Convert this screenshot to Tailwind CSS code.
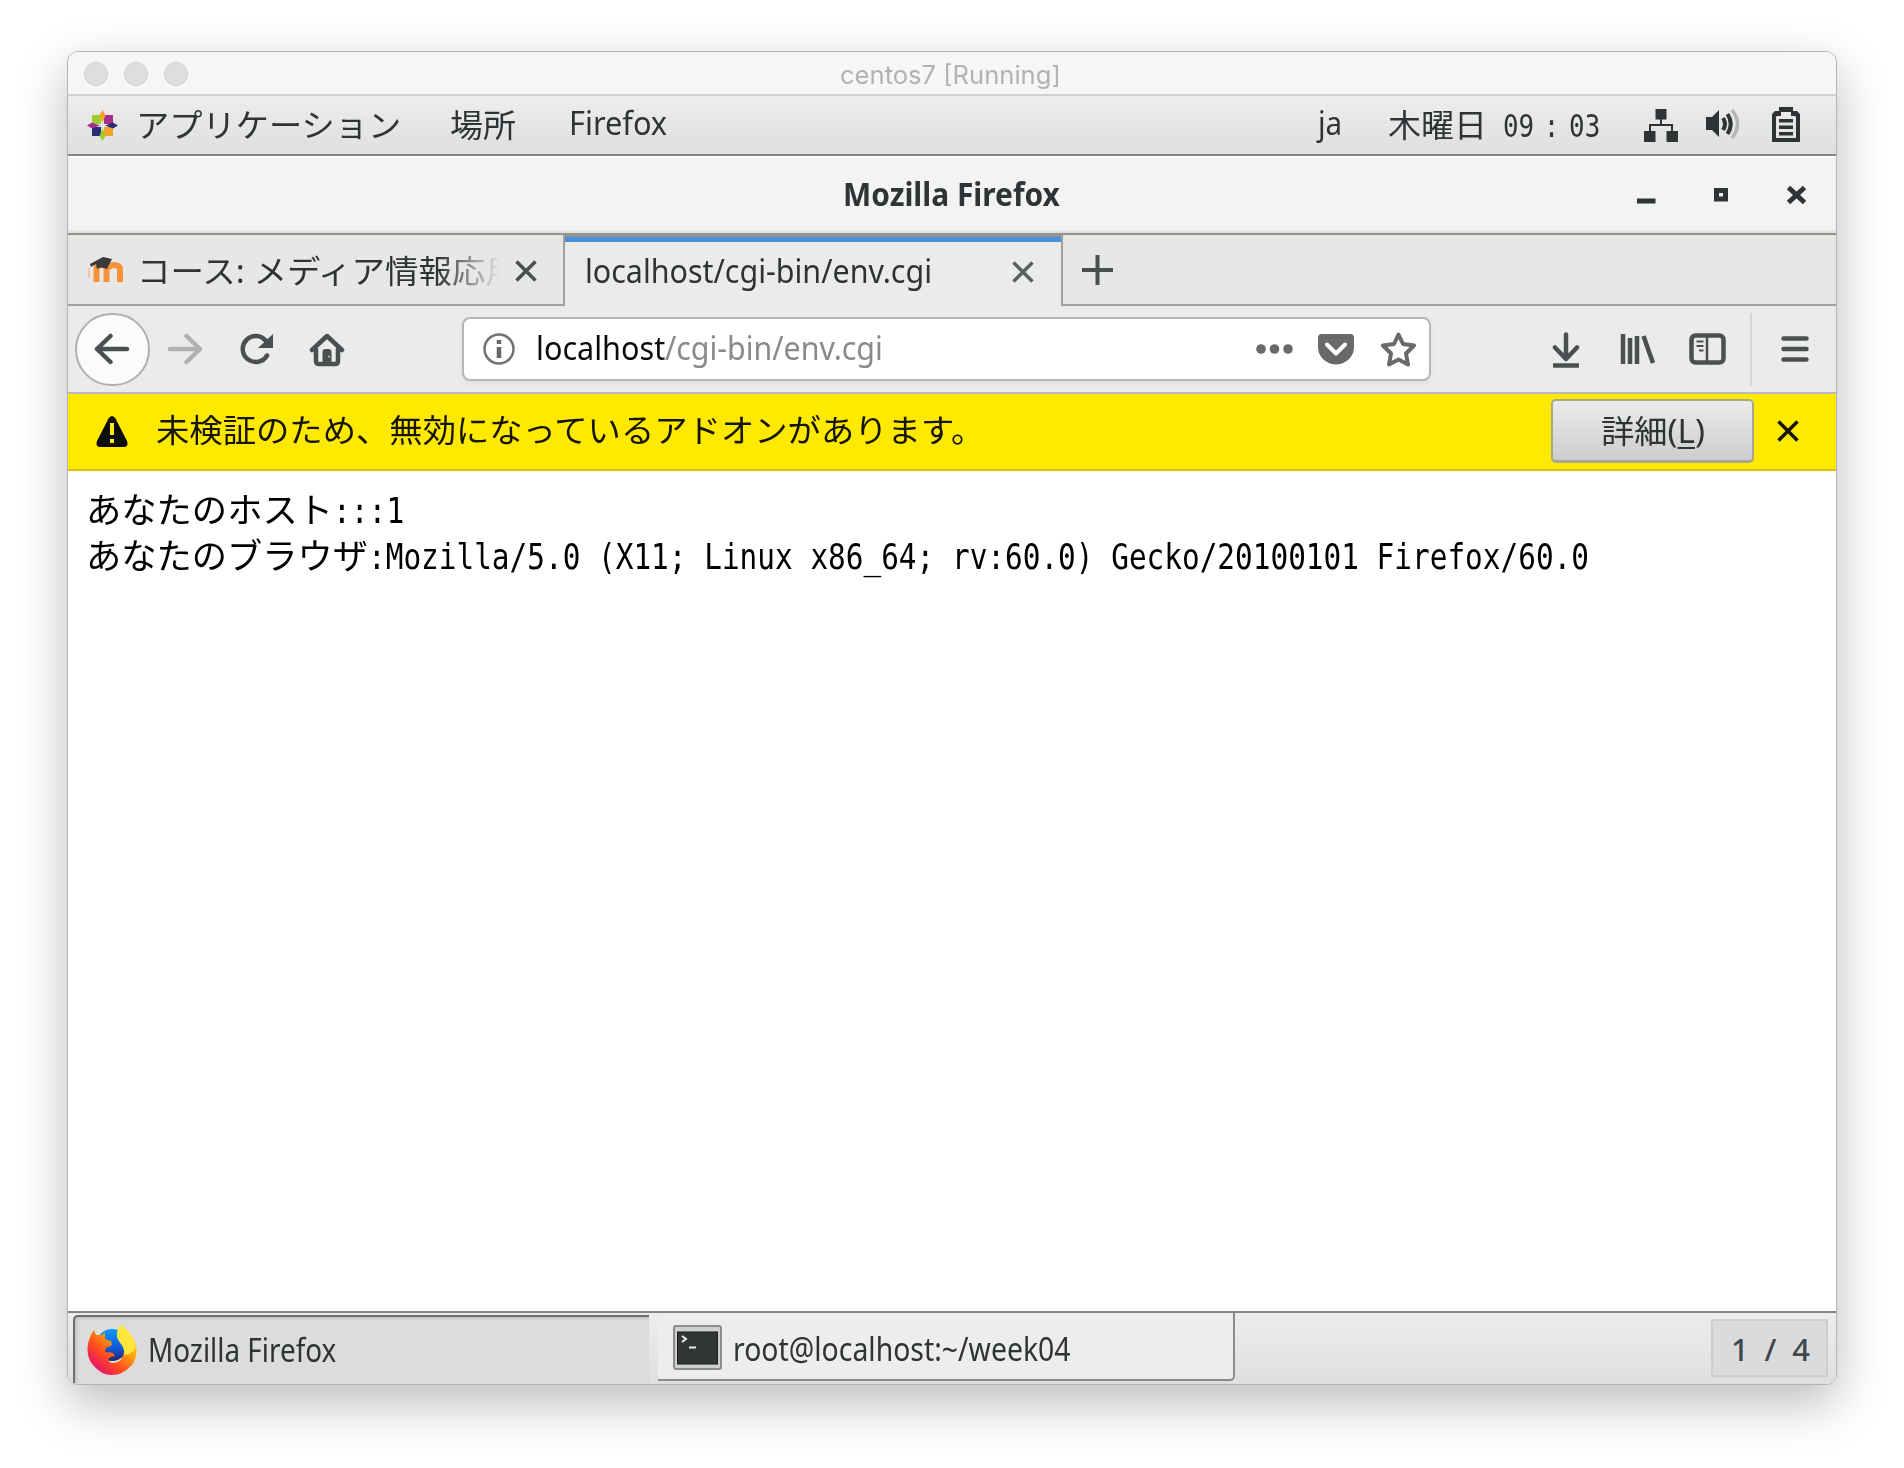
<!DOCTYPE html>
<html lang="ja">
<head>
<meta charset="utf-8">
<title>centos7 [Running]</title>
<script src="https://cdn.jsdelivr.net/npm/@tailwindcss/browser@4"></script>
</head>
<body class="w-[1904px] h-[1468px] overflow-hidden bg-white pt-[51px] pl-[67px] font-['Noto_Sans','Noto_Sans_CJK_JP',sans-serif] text-[32px] leading-[40px] text-[#2e3436]">
<div class="w-[1770px] h-[1334px] flex flex-col rounded-[11px] border border-[#b4b4b4] overflow-hidden bg-white shadow-[0_18px_50px_rgba(0,0,0,0.27)]">

  <!-- Host window title bar -->
  <header class="h-[44px] shrink-0 flex items-center bg-[#f6f6f6] border-b-2 border-[#d2d2d2] pl-[16px]">
    <div class="flex gap-[16px] pt-px">
      <i class="size-6 rounded-full bg-[#dedede] border border-[#cbcbcb]"></i>
      <i class="size-6 rounded-full bg-[#dedede] border border-[#cbcbcb]"></i>
      <i class="size-6 rounded-full bg-[#dedede] border border-[#cbcbcb]"></i>
    </div>
    <div data-fit class="ml-[652px] w-[221px] shrink-0 pt-[3px] font-['Inter',sans-serif] text-[25px] text-[#b2b2b2] whitespace-nowrap"><span class="inline-block origin-left">centos7 [Running]</span></div>
  </header>

  <!-- Desktop panel -->
  <nav class="h-[60px] shrink-0 flex items-center bg-linear-to-b from-[#ededed] to-[#dfdfdf] border-b-2 border-[#858585]">
    <svg class="ml-[19px] shrink-0" width="31" height="31" viewBox="0 0 31 31">
      <path fill="#9ccd2a" d="M5 5h9v9H5z"/><path fill="#a5308c" d="M17 5h9v9h-9z"/><path fill="#2b2a78" d="M5 17h9v9H5z"/><path fill="#f3a32b" d="M17 17h9v9h-9z"/>
      <path fill="#f3a32b" d="M15.500 0l3 5-3 8-3-8z"/><path fill="#2b2a78" d="M31 15.500l-5 3-8-3 8-3z"/><path fill="#9ccd2a" d="M15.500 31l-3-5 3-8 3 8z"/><path fill="#a5308c" d="M0 15.500l5-3 8 3-8 3z"/>
    </svg>
    <div data-fit class="ml-[18px] w-[265px] shrink-0 whitespace-nowrap"><span class="inline-block origin-left">アプリケーション</span></div>
    <div data-fit class="ml-[49px] w-[66px] shrink-0 whitespace-nowrap"><span class="inline-block origin-left">場所</span></div>
    <div data-fit class="ml-[53px] w-[98px] shrink-0 pb-[4px] whitespace-nowrap"><span class="inline-block origin-left">Firefox</span></div>
    <div data-fit class="ml-[651px] w-[24px] shrink-0 pb-[4px] whitespace-nowrap"><span class="inline-block origin-left">ja</span></div>
    <div data-fit class="ml-[46px] w-[99px] shrink-0 whitespace-nowrap"><span class="inline-block origin-left">木曜日</span></div>
    <div data-fit class="ml-[16px] w-[97px] shrink-0 pt-px font-['DejaVu_Sans_Mono',monospace] whitespace-nowrap"><span class="inline-block origin-left">09<span class="inline-block px-[12px]">:</span>03</span></div>
    <svg class="ml-[44px] shrink-0" width="34" height="33" viewBox="0 0 34 33" fill="#2e3436"><path d="M11.500 0h11v10.500H18V15h11v7h5v11H22.500V22H27v-5H7v5h4.500v11H0V22h5v-7h11v-4.500h-4.500z"/></svg>
    <svg class="ml-[28px] mb-[2px] shrink-0" width="35" height="32" viewBox="0 0 35 32"><path fill="#2e3436" d="M0 9h6l7-7v27l-7-7H0z"/><path d="M17 10q4 6 0 12M21.500 6q6.500 10 0 20" fill="none" stroke="#2e3436" stroke-width="4"/><path d="M26 2q11 14 0 28" fill="none" stroke="#b4b5b5" stroke-width="3.500"/></svg>
    <svg class="ml-[31px] mb-px shrink-0" width="28" height="35" viewBox="0 0 28 35"><path fill="#2e3436" fill-rule="evenodd" d="M7 0h14v4h4l3 3v28H0V7l3-3h4zM9 5v4H5l-1 1v21h20V10l-1-1h-4V5z"/><path fill="#2e3436" d="M7 12h14v3.500H7zM7 18.500h14V22H7zM7 25h14v3.500H7z"/></svg>
  </nav>

  <!-- Firefox title bar -->
  <div class="h-[79px] shrink-0 flex items-center bg-[#f3f3f3] border-b-2 border-[#95958f] shadow-[inset_0_-3px_3px_-1px_#dcdcdc,inset_0_2px_0_#fff]">
    <div data-fit class="ml-[775px] w-[217px] shrink-0 pb-[2px] font-bold whitespace-nowrap"><span class="inline-block origin-left">Mozilla Firefox</span></div>
    <svg class="ml-[577px] shrink-0" width="172" height="20" viewBox="0 0 172 20" fill="none" stroke="#2e3436"><path stroke-width="5" d="M0 16h18.500"/><path stroke-width="5" d="M79.500 5.500h9v8.500h-9z"/><path stroke-width="5" d="M151.500 2.500l16 15M167.500 2.500l-16 15"/></svg>
  </div>

  <!-- Tab strip -->
  <div class="h-[71px] shrink-0 flex bg-[#e7e7e5]">
    <div class="w-[497px] shrink-0 flex items-center border-r-2 border-b-2 border-[#a0a09d]">
      <svg class="ml-[20px] shrink-0" width="36" height="28" viewBox="0 0 36 28"><path d="M8.500 26V13q0-4 5-4t5 4v13M20 13q1-4 6-4 6 0 6 5v12" fill="none" stroke="#f7923a" stroke-width="6"/><path d="M1 12v10" stroke="#f5c4a6" stroke-width="2"/><path d="M2 8L15 1l9 2-5 10q-6-3-10 0l-1-5-5 3z" fill="#3b3939"/></svg>
      <div class="ml-[13px] w-[367px] shrink-0 overflow-hidden pt-[2px] whitespace-nowrap mask-r-from-[82%] mask-r-to-[99%]"><div data-fit class="w-[382px]"><span class="inline-block origin-left">コース: メディア情報応用</span></div></div>
      <svg class="ml-[11px] mt-[2px] shrink-0" width="22" height="22" viewBox="0 0 22 22" stroke="#4a5052" stroke-width="3.500"><path d="M1.500 1.500l19 19M20.500 1.500l-19 19"/></svg>
    </div>
    <div class="w-[496px] shrink-0 flex items-center bg-[#ebebe9] border-t-2 border-[#8f9497] shadow-[inset_0_5px_0_#4a90d9]">
      <div data-fit class="ml-[20px] w-[347px] shrink-0 pb-px whitespace-nowrap"><span class="inline-block origin-left">localhost/cgi-bin/env.cgi</span></div>
      <svg class="ml-[80px] shrink-0" width="22" height="22" viewBox="0 0 22 22" stroke="#5b6062" stroke-width="3.500"><path d="M1.500 1.500l19 19M20.500 1.500l-19 19"/></svg>
    </div>
    <div class="grow flex items-center border-l-2 border-b-2 border-[#a0a09d]">
      <svg class="ml-[19px] shrink-0" width="31" height="30" viewBox="0 0 31 30" stroke="#4a5052" stroke-width="4"><path d="M15.500 0v30M0 15h31"/></svg>
    </div>
  </div>

  <!-- Navigation toolbar -->
  <div class="h-[88px] shrink-0 flex items-center bg-[#ebebe9] border-b-2 border-[#b9b9b9]">
    <div class="ml-[7px] w-[75px] h-[73px] shrink-0 flex items-center justify-center rounded-full bg-[#fbfbfb] border-2 border-[#b0b0b0]">
      <svg class="mr-px" width="36" height="32" viewBox="0 0 36 32" fill="none" stroke="#4a5052" stroke-width="4.500" stroke-linecap="round" stroke-linejoin="round"><path d="M33 16H3M16.500 3L3 16l13.500 13"/></svg>
    </div>
    <svg class="ml-[17px] shrink-0" width="36" height="32" viewBox="0 0 36 32" fill="none" stroke="#afb0b0" stroke-width="4.500" stroke-linecap="round" stroke-linejoin="round"><path d="M3 16h30M19.500 3L33 16 19.500 29"/></svg>
    <svg class="ml-[36px] shrink-0" width="36" height="32" viewBox="0 0 36 32" fill="none"><path d="M28 22.500A13 13 0 1 1 27 8" stroke="#4a5052" stroke-width="4.500" stroke-linecap="round"/><path d="M34 1v14H19z" fill="#4a5052"/></svg>
    <svg class="ml-[34px] shrink-0" width="36" height="35" viewBox="0 0 36 35" fill="none"><path d="M3 18L18 4l15 14M7 17v12q0 3 3 3h16q3 0 3-3V17" stroke="#4a5052" stroke-width="4.500" stroke-linecap="round" stroke-linejoin="round"/><path fill="#4a5052" d="M13.500 20q0-3 3-3h3q3 0 3 3v12h-9z"/><circle cx="20" cy="24.500" r="1" fill="#ccc"/></svg>
    <div class="ml-[117px] w-[969px] h-[64px] shrink-0 flex items-center bg-white rounded-[8px] border-2 border-[#b6b6b5] shadow-[0_3px_5px_rgba(0,0,0,0.05)]">
      <svg class="ml-[19px] shrink-0" width="32" height="32" viewBox="0 0 32 32"><circle cx="16" cy="16" r="14.500" fill="none" stroke="#737373" stroke-width="2.500"/><path stroke="#666" stroke-width="4.500" d="M16 14v11M16 7v4"/></svg>
      <div data-fit class="ml-[21px] w-[129px] shrink-0 pb-[3px] text-[#0c0c0d] whitespace-nowrap"><span class="inline-block origin-left">localhost</span></div>
      <div data-fit class="w-[218px] shrink-0 pb-[3px] text-[#8a8a8a] whitespace-nowrap"><span class="inline-block origin-left">/cgi-bin/env.cgi</span></div>
      <svg class="ml-[373px] shrink-0" width="37" height="12" viewBox="0 0 37 12" fill="#696969"><circle cx="5" cy="6" r="4.800"/><circle cx="18.500" cy="6" r="4.800"/><circle cx="32" cy="6" r="4.800"/></svg>
      <svg class="ml-[25px] shrink-0" width="36" height="32" viewBox="0 0 36 32"><path fill="#696969" d="M3.500 1h29Q36 1 36 4.500V14q0 8-6 13-12 9-24 0-6-5-6-13V4.500Q0 1 3.500 1z"/><path d="M9 11.500l9 9 9-9" fill="none" stroke="#fff" stroke-width="4" stroke-linecap="round" stroke-linejoin="round"/></svg>
      <svg class="ml-[26px] shrink-0" width="37" height="36" viewBox="0 0 37 36"><path fill="none" stroke="#696969" stroke-width="4" stroke-linejoin="round" d="M18.500 3.500l4.500 9.500 11 1.500-8 8 2 11-9.500-5-9.500 5 2-11-8-8 11-1.500z"/></svg>
    </div>
    <svg class="ml-[121px] mt-px shrink-0" width="28" height="36" viewBox="0 0 28 36" fill="none" stroke="#4a5052" stroke-width="4.500" stroke-linecap="round" stroke-linejoin="round"><path d="M14 2.500V26M3 15.500L14 27l11-11.500"/><path d="M1 33.500h26" stroke-linecap="butt"/></svg>
    <svg class="ml-[40px] shrink-0" width="36" height="32" viewBox="0 0 36 32" stroke="#4a5052" stroke-width="4.500"><path d="M3 1v30M10 5v26M17 3v28M23.500 3L33 30"/></svg>
    <svg class="ml-[33px] shrink-0" width="37" height="32" viewBox="0 0 37 32" fill="none" stroke="#4a5052"><rect x="2.500" y="2.500" width="32" height="27" rx="4" stroke-width="4.500"/><path stroke-width="2.500" d="M18 3v26"/><path stroke-width="2" d="M7.500 8.500h7M7.500 13h7M10 17.500h4.500"/></svg>
    <div class="ml-[24px] w-[2px] h-[73px] bg-[#d6d6d5]"></div>
    <svg class="ml-[29px] shrink-0" width="28" height="28" viewBox="0 0 28 28" stroke="#4a5052" stroke-width="4.500" stroke-linecap="round"><path d="M2.500 3.500h23M2.500 14h23M2.500 24.500h23"/></svg>
  </div>

  <!-- Notification bar -->
  <div class="h-[77px] shrink-0 flex items-center bg-[#ffe900] border-b-2 border-[#d6c400]">
    <svg class="ml-[28px] mb-px shrink-0" width="32" height="31" viewBox="0 0 32 31"><path fill="#0c0c0d" d="M12.500 2.500q3.500-5 7 0L31 25q2 6-4 6H5q-6 0-4-6z"/><path stroke="#ffe900" stroke-width="4" d="M16 7v12M16 23v4"/></svg>
    <div data-fit class="ml-[28px] w-[828px] shrink-0 pb-[4px] text-[#151500] whitespace-nowrap"><span class="inline-block origin-left">未検証のため、無効になっているアドオンがあります。</span></div>
    <button class="ml-[567px] w-[203px] h-[64px] mb-[1px] shrink-0 flex items-center justify-center rounded-[5px] bg-linear-to-b from-[#ebebeb] to-[#cdcdcd] border-2 border-b-3 border-[#a9a690]">
      <div data-fit class="w-[104px] shrink-0 text-left whitespace-nowrap"><span class="inline-block origin-left">詳細(<span class="underline decoration-2 underline-offset-4">L</span>)</span></div>
    </button>
    <svg class="ml-[23px] mb-[2px] shrink-0" width="22" height="22" viewBox="0 0 22 22" stroke="#151500" stroke-width="3.500"><path d="M1.500 1.500l19 19M20.500 1.500l-19 19"/></svg>
  </div>

  <!-- Page content -->
  <main class="grow pl-[18px] pt-[18px] text-black font-['DejaVu_Sans_Mono','Noto_Sans_CJK_JP',monospace] text-[35px] leading-[45px] whitespace-nowrap">
    <div class="flex h-[46px]">
      <div data-fit class="w-[247px] shrink-0"><span class="inline-block origin-left">あなたのホスト</span></div>
      <div data-fit class="w-[71px] shrink-0"><span class="inline-block origin-left">:::1</span></div>
    </div>
    <div class="flex h-[45px]">
      <div data-fit class="w-[282px] shrink-0"><span class="inline-block origin-left">あなたのブラウザ</span></div>
      <div data-fit class="w-[1221px] shrink-0"><span class="inline-block origin-left">:Mozilla/5.0 (X11; Linux x86_64; rv:60.0) Gecko/20100101 Firefox/60.0</span></div>
    </div>
  </main>

  <!-- Window list -->
  <footer class="h-[73px] shrink-0 flex items-start bg-linear-to-b from-[#ededed] to-[#dfdfdf] border-t-2 border-[#858585]">
    <div class="ml-[5px] mt-[2px] w-[576px] h-[69px] shrink-0 flex items-center bg-[#dcdcdc] rounded-tl-[5px] border-t-2 border-l-2 border-[#6e6e6e] shadow-[inset_2px_2px_3px_#c4c4c4]">
      <svg class="ml-[12px] mb-px shrink-0" width="50" height="50" viewBox="0 0 50 50">
        <defs>
          <linearGradient id="fox" x1="0.900" y1="0.100" x2="0.200" y2="0.900"><stop offset="0" stop-color="#ffe226"/><stop offset="0.400" stop-color="#ff9a0b"/><stop offset="0.700" stop-color="#ff4a1f"/><stop offset="1" stop-color="#e8156b"/></linearGradient>
          <linearGradient id="globe" x1="0.500" y1="0" x2="0.500" y2="1"><stop offset="0" stop-color="#0a9bff"/><stop offset="0.600" stop-color="#1257d8"/><stop offset="1" stop-color="#2b2566"/></linearGradient>
        </defs>
        <circle cx="25" cy="20" r="16" fill="url(#globe)"/>
        <path fill="url(#fox)" d="M7 5l2 5 6 0 3-3 0 7q4 2 6 2l1 4-6 3-1 4q4 0 8 1l2 3q-4 0-6 2-2 4 3 5 9 0 11-7 3-6-1-12-6-6-4-13 2-4 3-6 12 9 15 20 2 12-4 20-9 10-20 10T6 40Q-1 32 1 19 3 10 7 5z"/>
        <path fill="#ffe63c" d="M34 0q12 8 15 22-4 8-12 8 1-6-3-11-5-6-4-11 1-5 4-8z"/>
      </svg>
      <div data-fit class="ml-[11px] w-[188px] shrink-0 pb-px whitespace-nowrap"><span class="inline-block origin-left">Mozilla Firefox</span></div>
    </div>
    <div class="ml-[9px] w-[577px] h-[68px] shrink-0 flex items-center bg-[#ededed] rounded-br-[5px] border-r-2 border-b-2 border-[#8b8b8b]">
      <svg class="ml-[15px] mt-[3px] shrink-0" width="49" height="46" viewBox="0 0 49 46"><rect x="1" y="1" width="47" height="43" rx="2" fill="#cfcfcf" stroke="#8c8c8c" stroke-width="2"/><rect x="4.500" y="7" width="40" height="32" fill="#303735" stroke="#161a19"/><path d="M9 11l4 3-4 3M16 22.500h7" fill="none" stroke="#eee" stroke-width="2"/></svg>
      <div data-fit class="ml-[11px] w-[338px] shrink-0 pt-[5px] whitespace-nowrap"><span class="inline-block origin-left">root@localhost:~/week04</span></div>
    </div>
    <div class="ml-[476px] mt-[6px] w-[117px] h-[58px] shrink-0 flex items-center justify-between pl-[18px] pr-[16px] pt-px bg-[#dbdbdb] border-2 border-[#cdcdcd] text-[#40474a] text-[31px] font-medium"><span>1</span><span>/</span><span>4</span></div>
  </footer>
</div>

<script>
  // Condense or stretch each label to the width of its box, again whenever either changes size.
  function fit(label) {
    var box = label.parentElement;
    if (label.offsetWidth) label.style.transform = 'scaleX(' + box.clientWidth / label.offsetWidth + ')';
  }
  var watcher = new ResizeObserver(function (entries) {
    entries.forEach(function (entry) {
      var el = entry.target;
      fit(el.hasAttribute('data-fit') ? el.firstElementChild : el);
    });
  });
  document.querySelectorAll('[data-fit]').forEach(function (box) {
    watcher.observe(box);
    watcher.observe(box.firstElementChild);
  });
</script>
</body>
</html>
